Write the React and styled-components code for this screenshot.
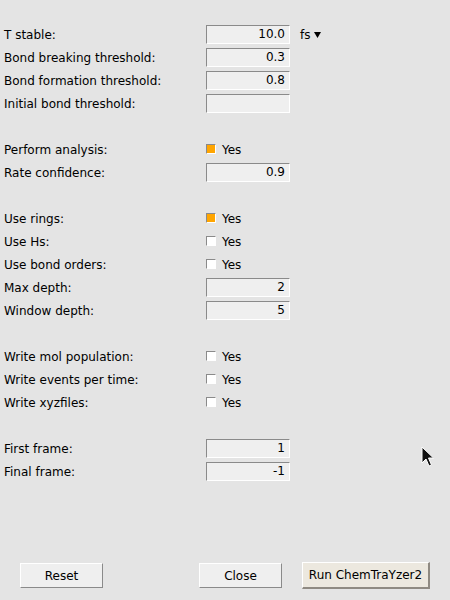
import React from "react";
import styled, { createGlobalStyle } from "styled-components";

const Global = createGlobalStyle`
  html, body { margin: 0; padding: 0; background: #e4e4e4; }
  * { box-sizing: border-box; }
`;

const Page = styled.div`
  position: relative;
  width: 450px;
  height: 600px;
  background: #e4e4e4;
  display: flex;
  flex-direction: column;
  font-family: "DejaVu Sans", "Liberation Sans", sans-serif;
  font-size: 12px;
  color: #000;
`;

const Form = styled.div`
  display: grid;
  grid-template-columns: 206px 84px auto;
  grid-auto-rows: 23px;
  padding-top: 23px;
  align-items: center;
`;

const Label = styled.div`
  grid-column: 1;
  padding-left: 4px;
  white-space: nowrap;
`;

const Blank = styled.div`
  grid-column: 1 / span 3;
`;

const Entry = styled.div`
  grid-column: 2;
  height: 19px;
  background: #efefef;
  border-top: 1px solid #8a8a8a;
  border-left: 1px solid #8a8a8a;
  border-right: 1px solid #ffffff;
  border-bottom: 1px solid #ffffff;
  text-align: right;
  padding-right: 4px;
  line-height: 17px;
`;

const CheckCell = styled.div`
  grid-column: 2 / span 2;
  display: flex;
  align-items: center;
  gap: 6px;
`;

const Box = styled.span`
  width: 10px;
  height: 10px;
  background: ${(p) => (p.$checked ? "#ffa500" : "#ffffff")};
  border-top: 1px solid #8a8a8a;
  border-left: 1px solid #8a8a8a;
  border-right: 1px solid #ffffff;
  border-bottom: 1px solid #ffffff;
  margin-top: -2px;
`;

const Menu = styled.div`
  grid-column: 3;
  padding-left: 10px;
  display: flex;
  align-items: center;
  gap: 4px;
`;

const Footer = styled.div`
  margin-top: auto;
  padding: 0 20px 11px 20px;
  display: flex;
  justify-content: space-between;
  align-items: center;
`;

const Group = styled.div`
  display: flex;
  align-items: center;
  gap: 20px;
`;

const Button = styled.div`
  width: ${(p) => (p.$wide ? "128px" : "83px")};
  height: ${(p) => (p.$wide ? "27px" : "25px")};
  background: ${(p) => (p.$wide ? "#ece8df" : "#efefef")};
  border-top: 1px solid #ffffff;
  border-left: 1px solid #ffffff;
  border-right: ${(p) => (p.$wide ? "2px solid #8f8a82" : "1px solid #8a8a8a")};
  border-bottom: ${(p) => (p.$wide ? "2px solid #8f8a82" : "1px solid #8a8a8a")};
  display: flex;
  align-items: center;
  justify-content: center;
  white-space: nowrap;
`;

const Cursor = styled.svg`
  position: absolute;
  left: 421px;
  top: 446px;
`;

const rows = [
  { t: "entry", label: "T stable:", value: "10.0", menu: true },
  { t: "entry", label: "Bond breaking threshold:", value: "0.3" },
  { t: "entry", label: "Bond formation threshold:", value: "0.8" },
  { t: "entry", label: "Initial bond threshold:", value: "" },
  { t: "blank" },
  { t: "check", label: "Perform analysis:", checked: true },
  { t: "entry", label: "Rate confidence:", value: "0.9" },
  { t: "blank" },
  { t: "check", label: "Use rings:", checked: true },
  { t: "check", label: "Use Hs:", checked: false },
  { t: "check", label: "Use bond orders:", checked: false },
  { t: "entry", label: "Max depth:", value: "2" },
  { t: "entry", label: "Window depth:", value: "5" },
  { t: "blank" },
  { t: "check", label: "Write mol population:", checked: false },
  { t: "check", label: "Write events per time:", checked: false },
  { t: "check", label: "Write xyzfiles:", checked: false },
  { t: "blank" },
  { t: "entry", label: "First frame:", value: "1" },
  { t: "entry", label: "Final frame:", value: "-1" },
];

export default function App() {
  return (
    <Page>
      <Global />
      <Form>
        {rows.map((r, i) => {
          if (r.t === "blank") return <Blank key={i} />;
          return (
            <React.Fragment key={i}>
              <Label>{r.label}</Label>
              {r.t === "entry" ? (
                <Entry>{r.value}</Entry>
              ) : (
                <CheckCell>
                  <Box $checked={r.checked} />
                  <span>Yes</span>
                </CheckCell>
              )}
              {r.menu && (
                <Menu>
                  <span>fs</span>
                  <svg width="7" height="6" viewBox="0 0 7 6">
                    <path d="M0 0 L7 0 L3.5 6 Z" fill="#000" />
                  </svg>
                </Menu>
              )}
            </React.Fragment>
          );
        })}
      </Form>
      <Footer>
        <Button>Reset</Button>
        <Group>
          <Button>Close</Button>
          <Button $wide>Run ChemTraYzer2</Button>
        </Group>
      </Footer>
      <Cursor width="14" height="22" viewBox="0 0 14 22">
        <path
          d="M1 1 L1 17 L5 13 L8 20 L10.5 19 L7.5 12 L12.5 12 Z"
          fill="#111"
          stroke="#fff"
          strokeWidth="1"
          strokeLinejoin="round"
        />
      </Cursor>
    </Page>
  );
}
